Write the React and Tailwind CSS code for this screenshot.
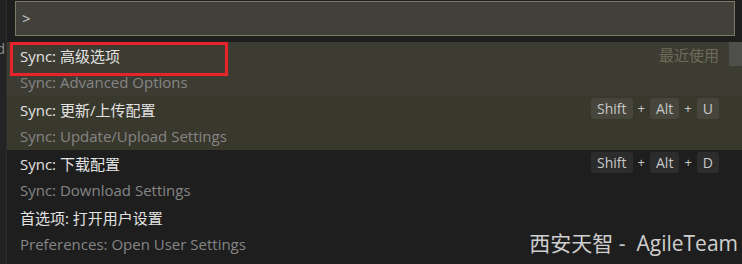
import React from 'react';

const font = { fontFamily: '"Open Sans", "Noto Sans CJK SC", sans-serif' };

const items = [
  { label: 'Sync: 高级选项', detail: 'Sync: Advanced Options', recent: true, bg: 'bg-[#3d3c33]' },
  { label: 'Sync: 更新/上传配置', detail: 'Sync: Update/Upload Settings', keys: ['Shift', 'Alt', 'U'], bg: 'bg-[#39382d]' },
  { label: 'Sync: 下载配置', detail: 'Sync: Download Settings', keys: ['Shift', 'Alt', 'D'], bg: 'bg-[#1e1e1e]' },
  { label: '首选项: 打开用户设置', detail: 'Preferences: Open User Settings', bg: 'bg-[#1e1e1e]' },
];

const Keys = ({ keys, dark }) => (
  <div className="flex items-center gap-[5px] text-[14px] text-[#c8c8c8]">
    {keys.map((k, i) => (
      <React.Fragment key={k}>
        {i > 0 && <span className="text-[13px]">+</span>}
        <span className={`h-[21px] px-[6px] flex items-center rounded-[3px] ${dark ? 'bg-[#2c2c2c]' : 'bg-[#47463c]'}`}>{k}</span>
      </React.Fragment>
    ))}
  </div>
);

export default function App() {
  return (
    <div className="relative w-[742px] h-[264px] overflow-hidden bg-[#1e1e1e] flex" style={font}>
      {/* editor edge behind the palette */}
      <div className="w-[7px] shrink-0 bg-[#232323] border-r border-[#2d2d2d] relative">
        <span className="absolute left-[-4px] top-[37px] text-[15px] text-[#8a8a8a]">d</span>
      </div>

      <div className="flex-1 flex flex-col">
        <div className="pl-[8px] pr-[7px] pt-[1px] pb-[6px]">
          <div className="h-[35px] bg-[#41403a] border border-[#7c7a62] flex items-center px-[6px] text-[15px] text-[#c8c8c8]">
            &gt;
          </div>
        </div>

        <div className="relative flex-1 flex flex-col">
          {items.map((it, idx) => (
            <div key={it.label} className={`h-[54px] shrink-0 flex items-center pl-[13px] pr-[23px] ${it.bg}`}>
              <div className="flex-1 flex flex-col">
                <div className="h-[27px] flex items-center text-[15px] text-[#e2e2e2]">{it.label}</div>
                <div className="h-[26px] flex items-center text-[15px] text-[#858585]">{it.detail}</div>
              </div>
              {it.recent && (
                <div className="self-start h-[27px] flex items-center text-[15px] text-[#6e6c58]">最近使用</div>
              )}
              {it.keys && (
                <div className="self-start h-[27px] flex items-center mt-[-1px]">
                  <Keys keys={it.keys} dark={idx > 1} />
                </div>
              )}
            </div>
          ))}

          {/* scrollbar thumb */}
          <div className="absolute right-0 top-0 w-[13px] h-[24px] bg-[#4e4e4a]" />

          {/* screenshot annotation */}
          <div className="absolute left-[3px] top-0 w-[218px] h-[34px] border-[3px] border-[#e8232b]" />

          {/* watermark */}
          <div className="absolute right-[4px] bottom-[5px] text-[21px] text-[#cfcfcf] whitespace-pre">西安天智 -  AgileTeam</div>
        </div>
      </div>
    </div>
  );
}
